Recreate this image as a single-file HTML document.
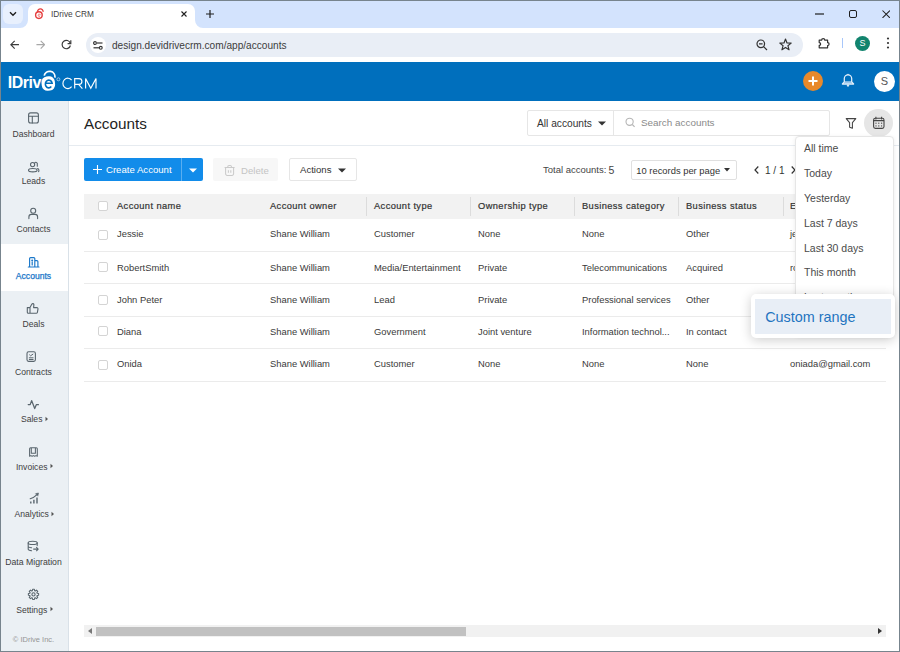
<!DOCTYPE html>
<html><head><meta charset="utf-8">
<style>
*{box-sizing:border-box;margin:0;padding:0}
html,body{width:900px;height:652px;overflow:hidden;background:#fff;font-family:"Liberation Sans",sans-serif;color:#333}
.a{position:absolute;white-space:nowrap}
#frame{position:absolute;left:0;top:0;width:900px;height:652px;border:1px solid #77848d;z-index:100;pointer-events:none}
#tabs{position:absolute;left:0;top:0;width:900px;height:28px;background:#d3e3fd}
#toolbar{position:absolute;left:0;top:28px;width:900px;height:34px;background:#fff}
#hdr{position:absolute;left:0;top:62px;width:900px;height:39px;background:#006fbd}
#side{position:absolute;left:0;top:101px;width:69px;height:551px;background:#ebf0f4;border-right:1px solid #d9e1e8}
.nav{position:absolute;left:1px;width:67px;height:47.6px;text-align:center}
.nav .lbl{position:absolute;white-space:nowrap;left:-1px;width:67px;text-align:center;top:27.6px;font-size:8.6px;color:#3e3e3e;letter-spacing:0}
.nav.act{background:#fff}
.nav.act .lbl{color:#1a77c9;-webkit-text-stroke:0.25px #1a77c9}
.th{position:absolute;top:201px;font-size:9.3px;color:#333;-webkit-text-stroke:0.2px #333;letter-spacing:0.4px;white-space:nowrap}
.td{position:absolute;font-size:9.4px;color:#3a3a3a;white-space:nowrap}
.sep{position:absolute;top:197px;width:1px;height:19px;background:#dcdcdc}
.rl{position:absolute;left:84px;width:802px;height:1px;background:#ebebeb}
.cb{position:absolute;left:98px;width:10px;height:10px;border:1px solid #d4d4d4;border-radius:2px;background:#fff}
.dd{position:absolute;left:804px;font-size:10.5px;color:#4a4a4a;white-space:nowrap}
</style></head><body>
<div id="frame"></div>

<!-- tab strip -->
<div id="tabs">
  <div class="a" style="left:3px;top:4px;width:20px;height:20px;border-radius:6px;background:#e8f0fd"></div>
  <svg class="a" style="left:9px;top:10.6px" width="8" height="6" viewBox="0 0 8 6"><path d="M1 1.2 L4 4.2 L7 1.2" fill="none" stroke="#1f1f1f" stroke-width="1.4"/></svg>
  <div class="a" style="left:28px;top:4px;width:167px;height:24px;background:#fff;border-radius:7px 7px 0 0"></div>
  <svg class="a" style="left:20px;top:20px" width="8" height="8" viewBox="0 0 8 8"><path d="M0 8 A8 8 0 0 0 8 0 V8 Z" fill="#fff"/></svg>
  <svg class="a" style="left:195px;top:20px" width="8" height="8" viewBox="0 0 8 8"><path d="M8 8 A8 8 0 0 1 0 0 V8 Z" fill="#fff"/></svg>
  <svg class="a" style="left:32px;top:6px" width="16" height="15" viewBox="32 6 16 15"><path d="M37.5 12.2 C37.3 7.9 43.5 7.9 43.1 11.9" fill="none" stroke="#e53e3e" stroke-width="1.3"/><ellipse cx="38.9" cy="15.1" rx="3.3" ry="3.4" fill="none" stroke="#e53e3e" stroke-width="1.4"/><path d="M38 15 H40.4 A1.2 1.3 0 1 0 40 16.3" fill="none" stroke="#ee8080" stroke-width="0.8"/></svg>
  <div class="a" style="left:51px;top:9px;font-size:8.3px;color:#3f3f3f">IDrive CRM</div>
  <svg class="a" style="left:181px;top:11px" width="6" height="6" viewBox="0 0 6 6"><path d="M0.5 0.5 L5.5 5.5 M5.5 0.5 L0.5 5.5" stroke="#1f1f1f" stroke-width="1.1"/></svg>
  <svg class="a" style="left:206px;top:10px" width="8" height="8" viewBox="0 0 8 8"><path d="M4 0 V8 M0 4 H8" stroke="#1f1f1f" stroke-width="1.2"/></svg>
  <svg class="a" style="left:815px;top:13px" width="9" height="2" viewBox="0 0 9 2"><path d="M0 1 H9" stroke="#1f1f1f" stroke-width="1.2"/></svg>
  <div class="a" style="left:849px;top:10px;width:8px;height:8px;border:1.2px solid #1f1f1f;border-radius:2px"></div>
  <svg class="a" style="left:881.5px;top:9.8px" width="8.4" height="8.4" viewBox="0 0 10 10"><path d="M0.6 0.6 L9.4 9.4 M9.4 0.6 L0.6 9.4" stroke="#1f1f1f" stroke-width="1.25"/></svg>
</div>

<!-- toolbar -->
<div id="toolbar">
  <svg class="a" style="left:10.3px;top:11.8px" width="9.4" height="9.4" viewBox="0 0 11 11"><path d="M10.5 5.5 H1.2 M5.5 1 L1 5.5 L5.5 10" fill="none" stroke="#3c3c3c" stroke-width="1.35"/></svg>
  <svg class="a" style="left:35.8px;top:11.8px" width="9.4" height="9.4" viewBox="0 0 11 11"><path d="M0.5 5.5 H9.8 M5.5 1 L10 5.5 L5.5 10" fill="none" stroke="#a8a8a8" stroke-width="1.35"/></svg>
  <svg class="a" style="left:61px;top:11px" width="11" height="11" viewBox="0 0 11 11"><path d="M9.3 4.2 A4.2 4.2 0 1 0 9.4 6.5" fill="none" stroke="#3c3c3c" stroke-width="1.2"/><path d="M6.6 4.6 H9.8 V1.2" fill="none" stroke="#3c3c3c" stroke-width="1.2"/></svg>
  <div class="a" style="left:86px;top:5px;width:717px;height:24px;border-radius:12px;background:#e9eef6"></div>
  <div class="a" style="left:90px;top:9px;width:16px;height:16px;border-radius:50%;background:#fff"></div>
  <svg class="a" style="left:93px;top:13px" width="10" height="9" viewBox="0 0 10 9"><circle cx="2" cy="2" r="1.4" fill="none" stroke="#333" stroke-width="1.1"/><path d="M4 2 H9.5" stroke="#333" stroke-width="1.2"/><circle cx="7.8" cy="6.8" r="1.4" fill="none" stroke="#333" stroke-width="1.1"/><path d="M0.5 6.8 H6" stroke="#333" stroke-width="1.2"/></svg>
  <div class="a" style="left:112px;top:12px;font-size:10.1px;color:#3c3c3c">design.devidrivecrm.com/app/accounts</div>
  <svg class="a" style="left:756px;top:11px" width="12" height="12" viewBox="0 0 12 12"><circle cx="4.8" cy="4.8" r="3.8" fill="none" stroke="#333" stroke-width="1.2"/><path d="M3 4.8 H6.6 M7.6 7.6 L11 11" stroke="#333" stroke-width="1.2"/></svg>
  <svg class="a" style="left:779px;top:10px" width="13" height="13" viewBox="0 0 13 13"><path d="M6.5 1 L8 5 L12.2 5.1 L8.9 7.7 L10.1 11.8 L6.5 9.4 L2.9 11.8 L4.1 7.7 L0.8 5.1 L5 5 Z" fill="none" stroke="#333" stroke-width="1.15" stroke-linejoin="round"/></svg>
  <svg class="a" style="left:810px;top:0" width="30" height="34" viewBox="810 28 30 34"><path d="M819.2 40.2 H821.6 A1.6 1.6 0 0 1 824.8 40.2 H827.6 V42.6 A1.5 1.5 0 0 1 827.6 45.6 V47.8 H819.2 V45.4 A1.4 1.4 0 0 0 819.2 42.6 Z" fill="none" stroke="#333" stroke-width="1.2" stroke-linejoin="round"/></svg>
  <div class="a" style="left:842px;top:10px;width:1px;height:10px;background:#a8c7fa"></div>
  <div class="a" style="left:855px;top:8px;width:15px;height:15px;border-radius:50%;background:#12846e"></div>
  <div class="a" style="left:855px;top:10px;width:15px;text-align:center;font-size:9px;color:#fff">S</div>
  <svg class="a" style="left:886px;top:9px" width="4" height="12" viewBox="0 0 4 12"><circle cx="2" cy="1.5" r="1.1" fill="#333"/><circle cx="2" cy="6" r="1.1" fill="#333"/><circle cx="2" cy="10.5" r="1.1" fill="#333"/></svg>
</div>

<!-- app header -->
<div id="hdr">
  <div class="a" style="left:7.8px;top:73.6px;margin-top:-62px;font-size:15.9px;font-weight:bold;color:#fff;letter-spacing:-0.45px">IDriv</div>
  <svg class="a" style="left:0;top:0" width="110" height="39" viewBox="0 62 110 39">
    <rect x="41.6" y="76.4" width="13.4" height="14.2" rx="5.6" fill="#fff" transform="rotate(-6 48.3 83.5)"/>
    <path d="M45.3 83.2 H52.1 A3.4 3.9 0 1 0 51.3 86.6" fill="none" stroke="#006fbd" stroke-width="1.6"/>
    <path d="M44.2 75.6 A5.5 5.5 0 0 1 55 77.6" fill="none" stroke="#fff" stroke-width="1.8"/>
    <circle cx="58.4" cy="79.3" r="1.5" fill="none" stroke="#cfe2f3" stroke-width="0.7"/>
    <path d="M71.6 80.1 A4.9 5.2 0 1 0 71.6 86.7" fill="none" stroke="#fff" stroke-width="1.15"/>
    <path d="M74.7 88.6 V78.6 H79 A2.9 2.9 0 0 1 79 84.4 H74.7 M78.6 84.4 L82.4 88.6" fill="none" stroke="#fff" stroke-width="1.15"/>
    <path d="M85.6 88.6 V78.6 L90.8 88.3 L96 78.6 V88.6" fill="none" stroke="#fff" stroke-width="1.15" stroke-linejoin="miter"/>
  </svg>
  <div class="a" style="left:803px;top:9px;width:20px;height:20px;border-radius:50%;background:#e8892b"></div>
  <svg class="a" style="left:806px;top:12px" width="14" height="14" viewBox="0 0 14 14"><path d="M7 2.5 V11.5 M2.5 7 H11.5" stroke="#fff" stroke-width="2"/></svg>
  <svg class="a" style="left:836px;top:8px" width="24" height="22" viewBox="836 70 24 22"><rect x="844.2" y="81.2" width="7.6" height="2.8" fill="#9cc6ea"/><path d="M844.3 81.8 V78.6 A3.7 3.7 0 0 1 851.7 78.6 V81.8 L853.6 84 H842.4 Z" fill="none" stroke="#e6f0fa" stroke-width="1.25" stroke-linejoin="round"/><path d="M847 85 L848 86.6 L849 85 Z" fill="#e6f0fa" stroke="#e6f0fa" stroke-width="0.8"/><circle cx="848" cy="74.4" r="0.7" fill="#e6f0fa"/></svg>
  <div class="a" style="left:874px;top:9px;width:21px;height:21px;border-radius:50%;background:#fff"></div>
  <div class="a" style="left:874px;top:13px;width:21px;text-align:center;font-size:11px;color:#555">S</div>
</div>

<!-- sidebar -->
<div id="side">
  <svg class="a" style="left:0;top:0;margin-top:-101px;z-index:2" width="69" height="652" viewBox="0 0 69 652" fill="none" stroke="#59656d" stroke-width="1.1" stroke-linecap="round" stroke-linejoin="round">
    <rect x="28.6" y="112.9" width="9.8" height="10.1" rx="2"/><path d="M28.6 116.2 H38.4 M32.3 116.2 V123"/>
    <circle cx="32.6" cy="164.6" r="2.1"/><path d="M34.5 163.4 A1.4 1.5 0 0 1 37.3 164.4 V166.3"/><ellipse cx="32.8" cy="170.2" rx="4.3" ry="1.7"/><path d="M37.6 168.6 A2 2 0 0 1 38.6 171.6"/>
    <circle cx="33.2" cy="210.8" r="2.5"/><path d="M28.9 218.6 V216.9 A2.5 2.5 0 0 1 31.4 214.4 H35.1 A2.5 2.5 0 0 1 37.6 216.9 V218.6"/>
    <g stroke="#1a77c9" stroke-width="1.15"><path d="M29.6 266.6 V258.6 A1 1 0 0 1 30.6 257.6 H33.8 A1 1 0 0 1 34.8 258.6 V266.6 M34.8 260.6 H36.9 A1 1 0 0 1 37.9 261.6 V266.6 M28.3 267 H39"/><path d="M32.2 262.4 V265" stroke-width="1.2"/><circle cx="32.2" cy="260.6" r="0.45" fill="#1a77c9"/></g>
    <path d="M27.3 307.6 H30 V313.3 H28.3 A1 1 0 0 1 27.3 312.3 Z M30 307.6 L31.9 304.1 A1.1 1.1 0 0 1 33.9 304.6 L33.6 307.6 H36.9 A1.1 1.1 0 0 1 38 308.9 L37.4 312.3 A1.3 1.3 0 0 1 36.1 313.3 H30"/>
    <rect x="27" y="351.8" width="8.4" height="9.6" rx="1.6"/><path d="M29.6 354.9 L30.6 355.8 L32.9 354.2 M29.3 357.8 H33.1 M29.3 359.5 H33.1" stroke-width="1"/>
    <path d="M28.2 404.6 H30.2 L31.6 400.6 L34.7 408.6 L36.3 404.7 H38.4" stroke-width="1.25"/>
    <path d="M29.6 456.3 V448.8 A1 1 0 0 1 30.6 447.8 H36.3 A1 1 0 0 1 37.3 448.8 V456.3 L36 455.6 L34.7 456.3 L33.4 455.6 L32.1 456.3 L30.9 455.6 Z M31.3 448.3 V453.2 H35.4 V448.3" stroke-width="1.05"/>
    <path d="M30.8 501.4 V503.5 M33.9 499.8 V503.5 M37 497.6 V503.5" stroke-width="1.4" stroke-linecap="butt"/><path d="M30.2 498.8 Q34 497.6 37 494.6"/><path d="M35.8 493.6 L38.5 493 L37.9 495.8 Z" fill="#59656d" stroke-width="0.6"/>
    <ellipse cx="32.7" cy="542.9" rx="4.5" ry="1.6"/><path d="M28.2 542.9 V549.3 A4.5 1.6 0 0 0 31.6 550.8 M28.2 546.2 A4.5 1.6 0 0 0 31.6 547.7 M37.2 542.9 V545.6"/><path d="M33.6 549.1 H38.1 M36.5 547.4 L38.2 549.1 L36.5 550.8" stroke-width="1.05"/>
    <path d="M32.38 590.77 L32.62 589.27 L34.38 589.27 L34.62 590.77 L35.27 591.04 L36.50 590.15 L37.75 591.40 L36.86 592.63 L37.13 593.28 L38.63 593.52 L38.63 595.28 L37.13 595.52 L36.86 596.17 L37.75 597.40 L36.50 598.65 L35.27 597.76 L34.62 598.03 L34.38 599.53 L32.62 599.53 L32.38 598.03 L31.73 597.76 L30.50 598.65 L29.25 597.40 L30.14 596.17 L29.87 595.52 L28.37 595.28 L28.37 593.52 L29.87 593.28 L30.14 592.63 L29.25 591.40 L30.50 590.15 L31.73 591.04 Z" stroke-width="1.05"/><circle cx="33.5" cy="594.4" r="1.6"/>
  </svg>
  <div class="nav" style="top:0.0px"><div class="lbl">Dashboard</div></div>
  <div class="nav" style="top:47.6px"><div class="lbl">Leads</div></div>
  <div class="nav" style="top:95.2px"><div class="lbl">Contacts</div></div>
  <div class="nav act" style="top:142.8px"><div class="lbl">Accounts</div></div>
  <div class="nav" style="top:190.4px"><div class="lbl">Deals</div></div>
  <div class="nav" style="top:238.0px"><div class="lbl">Contracts</div></div>
  <div class="nav" style="top:285.6px"><div class="lbl" style="left:0.5px">Sales<svg width="5" height="6" viewBox="0 0 5 6" style="margin-left:1.6px;vertical-align:0.3px"><path d="M1.5 0.8 L4 3 L1.5 5.2 Z" fill="#555"/></svg></div></div>
  <div class="nav" style="top:333.2px"><div class="lbl" style="left:0.5px">Invoices<svg width="5" height="6" viewBox="0 0 5 6" style="margin-left:1.6px;vertical-align:0.3px"><path d="M1.5 0.8 L4 3 L1.5 5.2 Z" fill="#555"/></svg></div></div>
  <div class="nav" style="top:380.8px"><div class="lbl" style="left:0.5px">Analytics<svg width="5" height="6" viewBox="0 0 5 6" style="margin-left:1.6px;vertical-align:0.3px"><path d="M1.5 0.8 L4 3 L1.5 5.2 Z" fill="#555"/></svg></div></div>
  <div class="nav" style="top:428.4px"><div class="lbl" style="font-size:8.7px">Data Migration</div></div>
  <div class="nav" style="top:476.0px"><div class="lbl" style="left:0.5px">Settings<svg width="5" height="6" viewBox="0 0 5 6" style="margin-left:1.6px;vertical-align:0.3px"><path d="M1.5 0.8 L4 3 L1.5 5.2 Z" fill="#555"/></svg></div></div>
  <div class="a" style="left:0;width:67px;top:534px;text-align:center;font-size:7.5px;color:#959595">© IDrive Inc.</div>
</div>

<!-- content -->
<div id="content">
  <div class="a" style="left:84px;top:114.5px;font-size:15.3px;color:#1e1e1e">Accounts</div>
  <div class="a" style="left:69px;top:145px;width:830px;height:1px;background:#e6ebf0"></div>

  <!-- filters -->
  <div class="a" style="left:527px;top:110px;width:303px;height:26px;border:1px solid #e6e6e6;border-radius:2px"></div>
  <div class="a" style="left:613px;top:111px;width:1px;height:24px;background:#e6e6e6"></div>
  <div class="a" style="left:537px;top:117.5px;font-size:10.2px;color:#333">All accounts</div>
  <svg class="a" style="left:598px;top:121px" width="8" height="5" viewBox="0 0 8 5"><path d="M0 0.5 H8 L4 4.5 Z" fill="#333"/></svg>
  <svg class="a" style="left:625px;top:117px" width="11" height="11" viewBox="0 0 11 11"><circle cx="4.6" cy="4.8" r="3.6" fill="none" stroke="#b5b5b5" stroke-width="1.1"/><path d="M7.3 7.5 L9.6 9.8" stroke="#b5b5b5" stroke-width="1.1"/></svg>
  <div class="a" style="left:641px;top:117px;font-size:9.9px;color:#8a8a8a">Search accounts</div>
  <svg class="a" style="left:840px;top:108px" width="20" height="25" viewBox="840 108 20 25"><path d="M846.2 118.6 H855.8 L852.4 122.6 V128.3 L849.6 127.3 V122.6 Z" fill="none" stroke="#444" stroke-width="1.05" stroke-linejoin="round"/></svg>
  <div class="a" style="left:864px;top:108.5px;width:29px;height:28.5px;border-radius:50%;background:#e6e6e6"></div>
  <svg class="a" style="left:866px;top:110px" width="26" height="25" viewBox="866 110 26 25"><rect x="873.6" y="118.3" width="10.4" height="10.1" rx="1.8" fill="none" stroke="#444" stroke-width="1.1"/><path d="M873.6 120.6 H884 M875.9 116.8 V119.4 M881.6 116.8 V119.4" fill="none" stroke="#444" stroke-width="1.05"/><g fill="#444"><circle cx="876" cy="123.2" r="0.65"/><circle cx="878.8" cy="123.2" r="0.65"/><circle cx="881.6" cy="123.2" r="0.65"/><circle cx="876" cy="125.9" r="0.65"/><circle cx="878.8" cy="125.9" r="0.65"/><circle cx="881.6" cy="125.9" r="0.65"/></g></svg>

  <!-- actions -->
  <div class="a" style="left:84px;top:158px;width:119px;height:23px;background:#128cea;border-radius:2px"></div>
  <div class="a" style="left:181px;top:158px;width:1px;height:23px;background:#5aaef0"></div>
  <svg class="a" style="left:93px;top:165px" width="9" height="9" viewBox="0 0 9 9"><path d="M4.5 0 V9 M0 4.5 H9" stroke="#fff" stroke-width="1.1"/></svg>
  <div class="a" style="left:106px;top:164px;font-size:9.6px;color:#fff">Create Account</div>
  <svg class="a" style="left:188.5px;top:167.5px" width="8" height="5" viewBox="0 0 8 5"><path d="M0 0.5 H8 L4 4.5 Z" fill="#fff"/></svg>

  <div class="a" style="left:213px;top:158px;width:65px;height:23px;background:#f7f7f7;border-radius:2px"></div>
  <svg class="a" style="left:220px;top:160px" width="20" height="20" viewBox="220 160 20 20"><path d="M224.6 167.4 H234.6 M227.8 167.2 V166.6 A1.2 1.2 0 0 1 229 165.4 H230.2 A1.2 1.2 0 0 1 231.4 166.6 V167.2 M225.6 167.6 V173.8 A1.6 1.6 0 0 0 227.2 175.4 H232 A1.6 1.6 0 0 0 233.6 173.8 V167.6 M228.4 170.2 V172.8 M230.8 170.2 V172.8" fill="none" stroke="#cacaca" stroke-width="1.05"/></svg>
  <div class="a" style="left:241px;top:164.5px;font-size:9.6px;color:#c4c4c4">Delete</div>

  <div class="a" style="left:289px;top:158px;width:68px;height:23px;border:1px solid #e6e6e6;border-radius:2px"></div>
  <div class="a" style="left:300px;top:164px;font-size:9.6px;color:#333">Actions</div>
  <svg class="a" style="left:338px;top:168px" width="8" height="5" viewBox="0 0 8 5"><path d="M0 0.5 H8 L4 4.5 Z" fill="#333"/></svg>

  <div class="a" style="left:543px;top:164px;font-size:9.5px;color:#444">Total accounts:</div>
  <div class="a" style="left:608.5px;top:164px;font-size:10.5px;color:#444">5</div>
  <div class="a" style="left:631px;top:160px;width:106px;height:20px;border:1px solid #e0e0e0;border-radius:2px"></div>
  <div class="a" style="left:636.3px;top:164.7px;font-size:9.4px;color:#333">10 records per page</div>
  <svg class="a" style="left:724px;top:168px" width="6" height="4" viewBox="0 0 6 4"><path d="M0 0 H6 L3 3.5 Z" fill="#333"/></svg>
  <svg class="a" style="left:754px;top:166px" width="5" height="8" viewBox="0 0 5 8"><path d="M4.3 0.5 L1 4 L4.3 7.5" fill="none" stroke="#333" stroke-width="1.2"/></svg>
  <div class="a" style="left:765px;top:164.6px;font-size:10px;color:#333">1 / 1</div>
  <svg class="a" style="left:791px;top:166px" width="5" height="8" viewBox="0 0 5 8"><path d="M0.7 0.5 L4 4 L0.7 7.5" fill="none" stroke="#333" stroke-width="1.2"/></svg>

  <!-- table -->
  <div class="a" style="left:84px;top:194px;width:802px;height:25px;background:#f2f2f2"></div>
  <div class="cb" style="top:201px"></div>
  <div class="th" style="left:117px">Account name</div>
  <div class="th" style="left:270px">Account owner</div>
  <div class="sep" style="left:366px"></div>
  <div class="th" style="left:374px">Account type</div>
  <div class="sep" style="left:470px"></div>
  <div class="th" style="left:478px">Ownership type</div>
  <div class="sep" style="left:574px"></div>
  <div class="th" style="left:582px">Business category</div>
  <div class="sep" style="left:678px"></div>
  <div class="th" style="left:686px">Business status</div>
  <div class="sep" style="left:783px"></div>
  <div class="th" style="left:790px">Email</div>

  <div class="rl" style="top:251px"></div>
  <div class="rl" style="top:283px"></div>
  <div class="rl" style="top:316px"></div>
  <div class="rl" style="top:348px"></div>
  <div class="rl" style="top:381px"></div>

  <div class="cb" style="top:230px"></div><div class="cb" style="top:262px"></div><div class="cb" style="top:295px"></div><div class="cb" style="top:326px"></div><div class="cb" style="top:360px"></div>

  <div class="td" style="left:117px;top:228px">Jessie</div>
  <div class="td" style="left:270px;top:228px">Shane William</div>
  <div class="td" style="left:374px;top:228px">Customer</div>
  <div class="td" style="left:478px;top:228px">None</div>
  <div class="td" style="left:582px;top:228px">None</div>
  <div class="td" style="left:686px;top:228px">Other</div>
  <div class="td" style="left:790px;top:228px">jessie@gmail.com</div>

  <div class="td" style="left:117px;top:262px">RobertSmith</div>
  <div class="td" style="left:270px;top:262px">Shane William</div>
  <div class="td" style="left:374px;top:262px">Media/Entertainment</div>
  <div class="td" style="left:478px;top:262px">Private</div>
  <div class="td" style="left:582px;top:262px">Telecommunications</div>
  <div class="td" style="left:686px;top:262px">Acquired</div>
  <div class="td" style="left:790px;top:262px">robert@gmail.com</div>

  <div class="td" style="left:117px;top:294px">John Peter</div>
  <div class="td" style="left:270px;top:294px">Shane William</div>
  <div class="td" style="left:374px;top:294px">Lead</div>
  <div class="td" style="left:478px;top:294px">Private</div>
  <div class="td" style="left:582px;top:294px">Professional services</div>
  <div class="td" style="left:686px;top:294px">Other</div>

  <div class="td" style="left:117px;top:326px">Diana</div>
  <div class="td" style="left:270px;top:326px">Shane William</div>
  <div class="td" style="left:374px;top:326px">Government</div>
  <div class="td" style="left:478px;top:326px">Joint venture</div>
  <div class="td" style="left:582px;top:326px">Information technol...</div>
  <div class="td" style="left:686px;top:326px">In contact</div>

  <div class="td" style="left:117px;top:358px">Onida</div>
  <div class="td" style="left:270px;top:358px">Shane William</div>
  <div class="td" style="left:374px;top:358px">Customer</div>
  <div class="td" style="left:478px;top:358px">None</div>
  <div class="td" style="left:582px;top:358px">None</div>
  <div class="td" style="left:686px;top:358px">None</div>
  <div class="td" style="left:790px;top:358px">oniada@gmail.com</div>

  <!-- scrollbar -->
  <div class="a" style="left:84px;top:625px;width:802px;height:12px;background:#f1f1f1"></div>
  <div class="a" style="left:96px;top:627px;width:370px;height:9px;background:#c1c1c1"></div>
  <svg class="a" style="left:88px;top:628px" width="4" height="6" viewBox="0 0 4 6"><path d="M4 0 V6 L0 3 Z" fill="#777"/></svg>
  <svg class="a" style="left:878px;top:628px" width="4" height="6" viewBox="0 0 4 6"><path d="M0 0 V6 L4 3 Z" fill="#333"/></svg>
</div>

<!-- date dropdown -->
<div class="a" style="left:795px;top:136px;width:99px;height:200px;background:#fff;border:1px solid #e6e6e6;border-radius:4px;box-shadow:0 1px 4px rgba(0,0,0,0.08);z-index:10"></div>
<div style="position:absolute;z-index:11">
  <div class="dd" style="top:142px">All time</div>
  <div class="dd" style="top:167px">Today</div>
  <div class="dd" style="top:192px">Yesterday</div>
  <div class="dd" style="top:217px">Last 7 days</div>
  <div class="dd" style="top:242px">Last 30 days</div>
  <div class="dd" style="top:266px">This month</div>
  <div class="dd" style="top:291px">Last month</div>
</div>
<div class="a" style="left:751px;top:294px;width:144px;height:44px;background:#fff;border-radius:5px;box-shadow:0 2px 12px rgba(0,0,0,0.2);z-index:20"></div>
<div class="a" style="left:755px;top:299px;width:136px;height:35px;background:#e8eef6;z-index:21"></div>
<div class="a" style="left:765.2px;top:309px;font-size:14.4px;color:#1f74c0;z-index:22">Custom range</div>
</body></html>
